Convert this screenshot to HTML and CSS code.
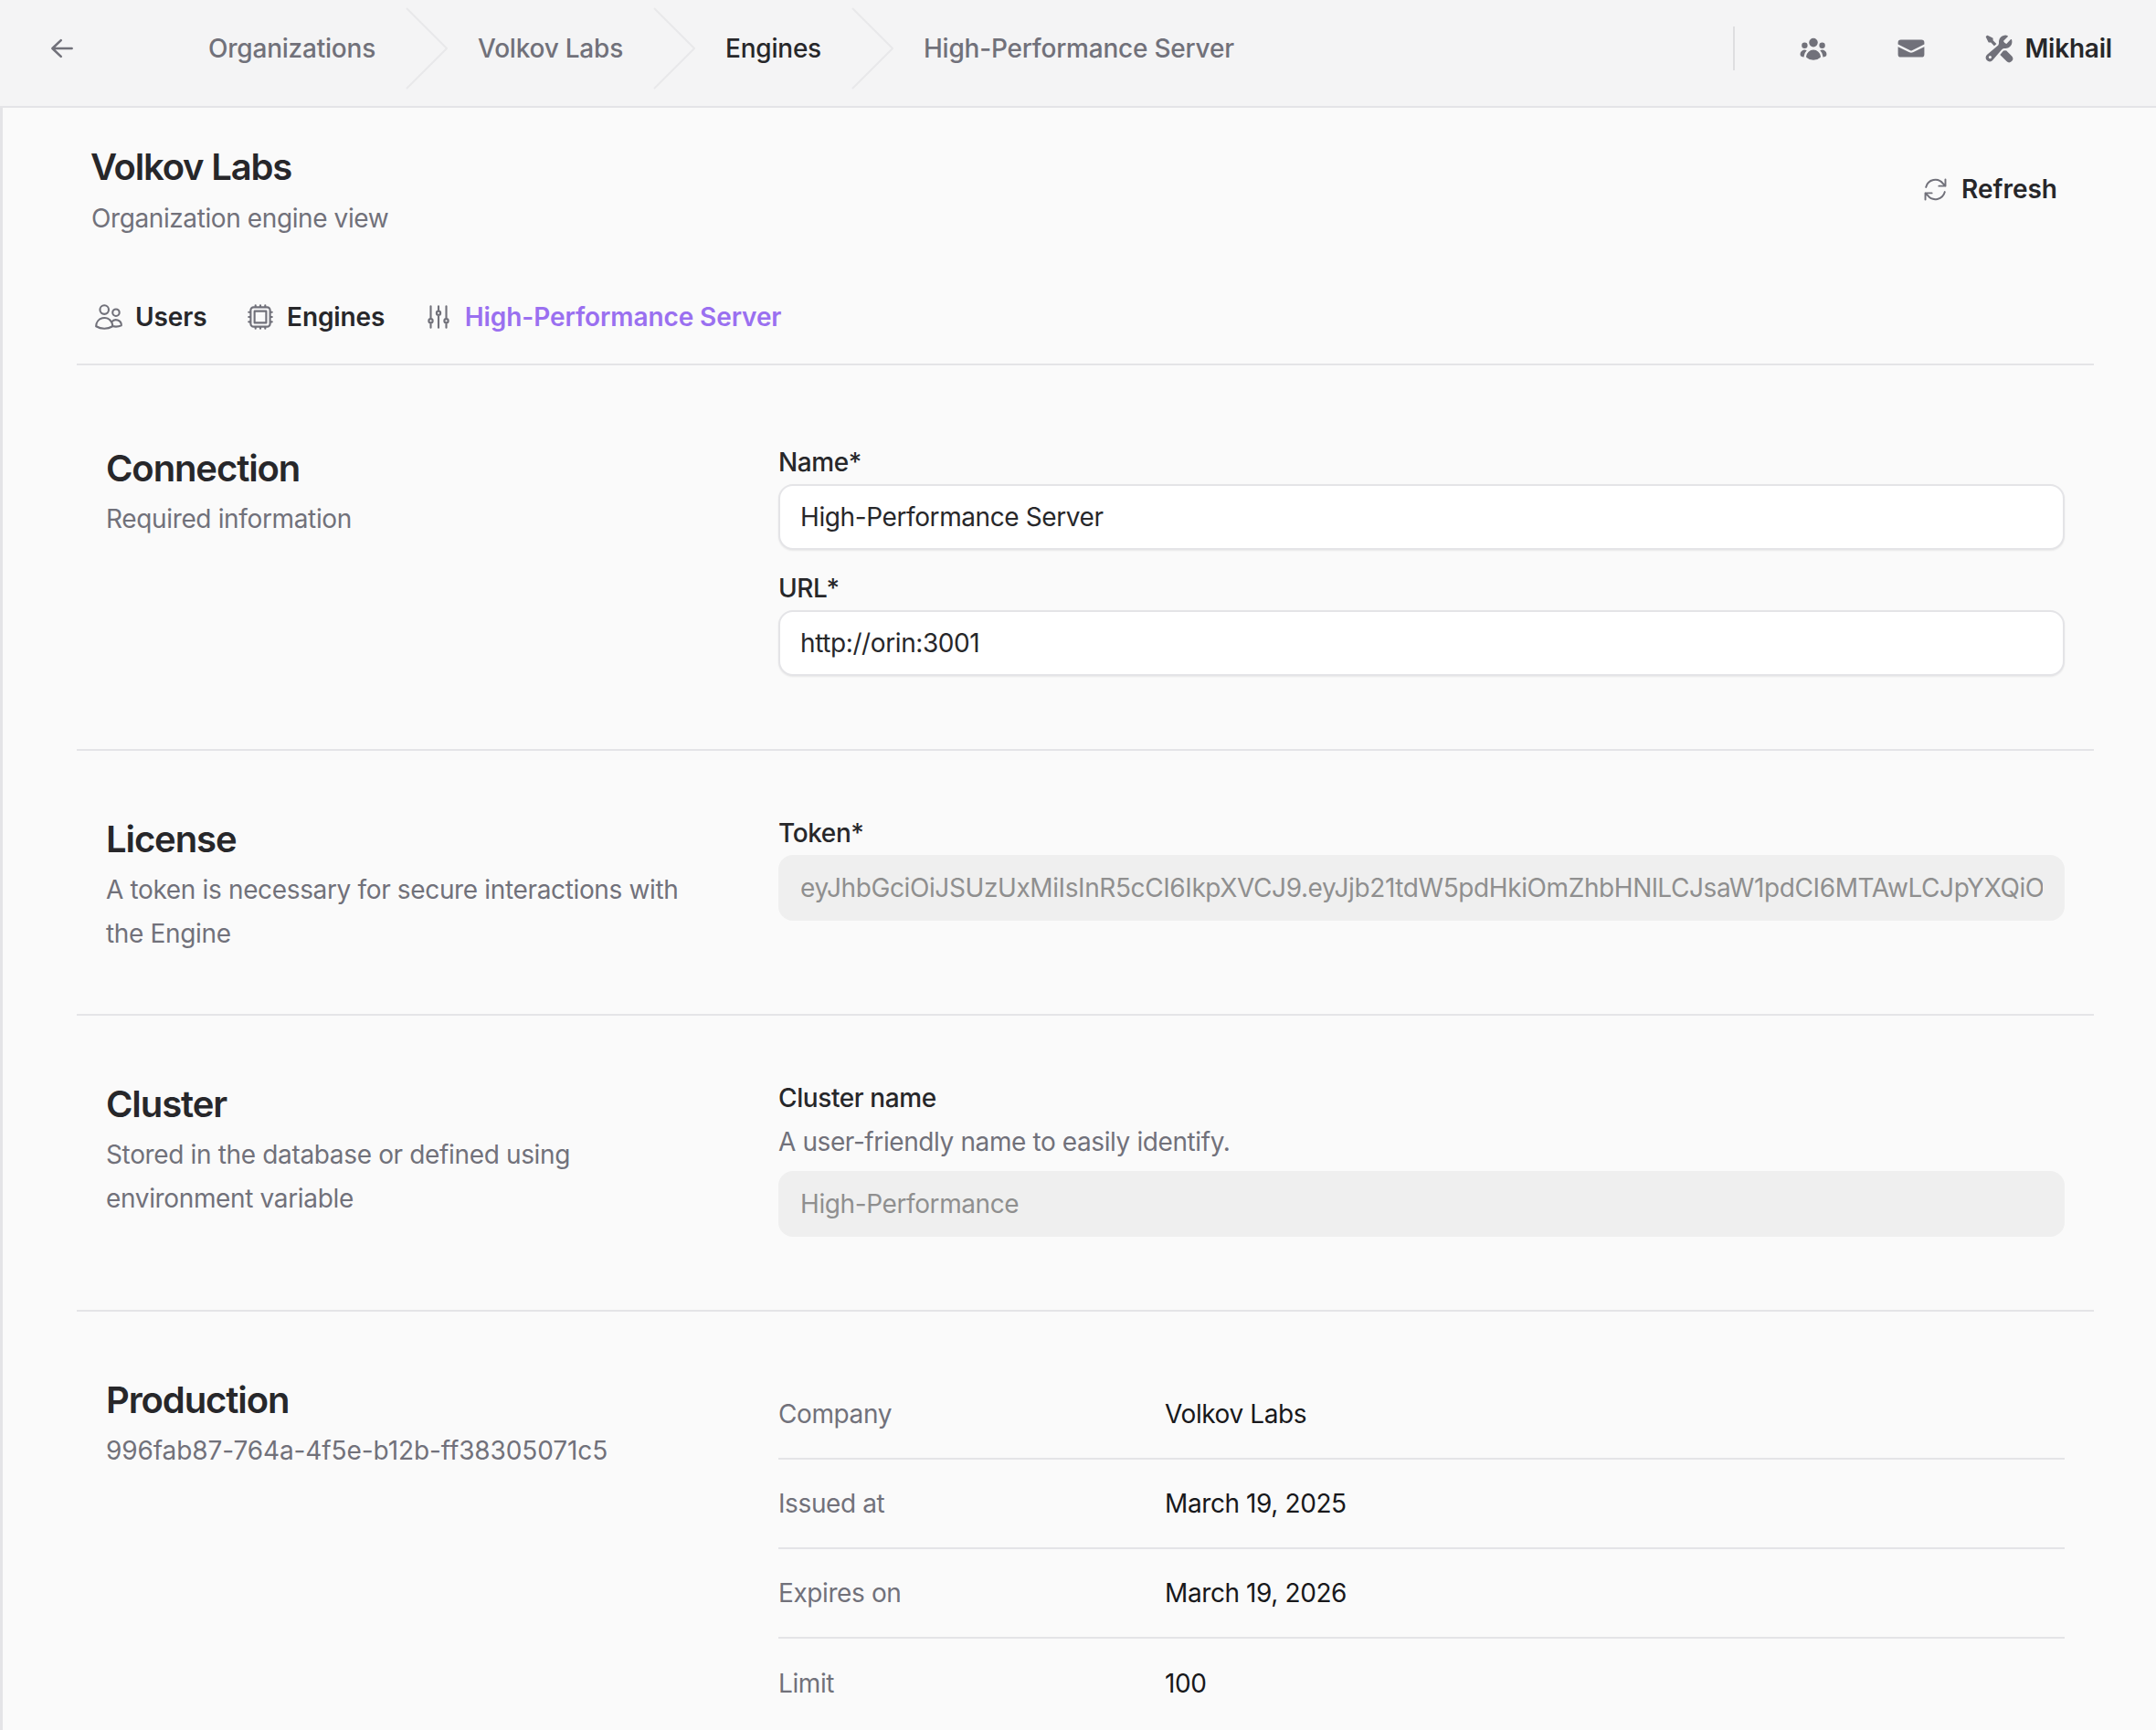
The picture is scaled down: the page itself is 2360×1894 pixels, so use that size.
FILE: index.html
```html
<!DOCTYPE html>
<html lang="en">
<head>
<meta charset="utf-8">
<title>High-Performance Server</title>
<link rel="stylesheet" href="styles.css">
</head>
<body>
<header class="topbar">
  <svg class="back" viewBox="0 0 20 20"><path fill-rule="evenodd" clip-rule="evenodd" d="M17 10a.75.75 0 0 1-.75.75H5.612l4.158 3.96a.75.75 0 1 1-1.04 1.08l-5.5-5.25a.75.75 0 0 1 0-1.08l5.5-5.25a.75.75 0 1 1 1.04 1.08L5.612 9.25H16.25A.75.75 0 0 1 17 10Z"/></svg>
  <nav class="crumbs">
    <a class="crumb">Organizations</a>
    <svg class="chev" viewBox="0 0 46 90" preserveAspectRatio="none"><path d="M1 1 L45 45 L1 89"/></svg>
    <a class="crumb">Volkov Labs</a>
    <svg class="chev" viewBox="0 0 46 90" preserveAspectRatio="none"><path d="M1 1 L45 45 L1 89"/></svg>
    <a class="crumb crumb-current">Engines</a>
    <svg class="chev" viewBox="0 0 46 90" preserveAspectRatio="none"><path d="M1 1 L45 45 L1 89"/></svg>
    <a class="crumb crumb-last">High-Performance Server</a>
  </nav>
  <div class="bar-right">
    <span class="bar-divider"></span>
    <svg class="bar-icon icon-group" viewBox="0 0 20 20"><path d="M10 9a3 3 0 1 0 0-6 3 3 0 0 0 0 6ZM6 8a2 2 0 1 1-4 0 2 2 0 0 1 4 0ZM1.49 15.326a.78.78 0 0 1-.358-.442 3 3 0 0 1 4.308-3.516 6.484 6.484 0 0 0-1.905 3.959c-.023.222-.014.442.025.654a4.97 4.97 0 0 1-2.07-.655ZM16.44 15.98a4.97 4.97 0 0 0 2.07-.654.78.78 0 0 0 .357-.442 3 3 0 0 0-4.308-3.517 6.484 6.484 0 0 1 1.907 3.96 2.32 2.32 0 0 1-.026.654ZM18 8a2 2 0 1 1-4 0 2 2 0 0 1 4 0ZM5.304 16.19a.844.844 0 0 1-.277-.71 5 5 0 0 1 9.947 0 .843.843 0 0 1-.277.71A6.975 6.975 0 0 1 10 18a6.974 6.974 0 0 1-4.696-1.81Z"/></svg>
    <svg class="bar-icon icon-mail" viewBox="0 0 20 20"><path d="M3 4a2 2 0 0 0-2 2v1.161l8.441 4.221a1.25 1.25 0 0 0 1.118 0L19 7.162V6a2 2 0 0 0-2-2H3Z"/><path d="m19 8.839-7.77 3.885a2.75 2.75 0 0 1-2.46 0L1 8.839V14a2 2 0 0 0 2 2h14a2 2 0 0 0 2-2V8.839Z"/></svg>
    <div class="user">
      <svg class="bar-icon icon-tools" viewBox="0 0 20 20"><path fill-rule="evenodd" clip-rule="evenodd" d="M14.5 10a4.5 4.5 0 0 0 4.284-5.882c-.105-.324-.51-.391-.752-.15L15.34 6.66a.454.454 0 0 1-.493.11 3.01 3.01 0 0 1-1.618-1.616.455.455 0 0 1 .11-.494l2.694-2.692c.24-.241.174-.647-.15-.752a4.5 4.5 0 0 0-5.873 4.575c.055.873-.128 1.808-.8 2.368l-7.23 6.024a2.724 2.724 0 1 0 3.837 3.837L12.02 10.8c.56-.672 1.495-.855 2.368-.8.037.003.074.005.112.005ZM5 16a1 1 0 1 1-2 0 1 1 0 0 1 2 0Z"/><path d="M14.5 11.5c.173 0 .345-.007.514-.022l3.754 3.754a2.5 2.5 0 0 1-3.536 3.536l-4.41-4.41 2.172-2.607c.052-.063.147-.138.342-.196.202-.06.469-.087.777-.067.128.008.257.012.387.012ZM6 4.586l2.33 2.33a.452.452 0 0 1-.08.09L6.8 8.214 4.586 6H3.309a.5.5 0 0 1-.447-.276l-1.7-3.402a.5.5 0 0 1 .093-.577l.49-.49a.5.5 0 0 1 .577-.094l3.402 1.7A.5.5 0 0 1 6 3.31v1.277Z"/></svg>
      <span class="user-name">Mikhail</span>
    </div>
  </div>
</header>

<main class="content">
  <div class="page-head">
    <div>
      <h1 class="page-title">Volkov Labs</h1>
      <p class="page-sub">Organization engine view</p>
    </div>
    <button class="refresh" type="button">
      <svg class="line-icon refresh-icon" viewBox="0 0 24 24"><path d="M4 10A8.2 8.2 0 0 1 18.5 7L20.5 9V3.5M20.5 9H15M20 14A8.2 8.2 0 0 1 5.5 17L3.5 15V20.5M3.5 15H9"/></svg>
      Refresh
    </button>
  </div>

  <nav class="tabs">
    <a class="tab">
      <svg class="line-icon tab-icon" viewBox="0 0 24 24"><path d="M15 19.128a9.38 9.38 0 0 0 2.625.372 9.337 9.337 0 0 0 4.121-.952 4.125 4.125 0 0 0-7.533-2.493M15 19.128v-.003c0-1.113-.285-2.16-.786-3.07M15 19.128v.106A12.318 12.318 0 0 1 8.624 21c-2.331 0-4.512-.645-6.374-1.766l-.001-.109a6.375 6.375 0 0 1 11.964-3.07M12 6.375a3.375 3.375 0 1 1-6.75 0 3.375 3.375 0 0 1 6.75 0Zm8.25 2.25a2.625 2.625 0 1 1-5.25 0 2.625 2.625 0 0 1 5.25 0Z"/></svg>
      Users
    </a>
    <a class="tab">
      <svg class="line-icon tab-icon" viewBox="0 0 24 24"><path d="M8.25 3v1.5M4.5 8.25H3m18 0h-1.5M4.5 12H3m18 0h-1.5m-15 3.75H3m18 0h-1.5M8.25 19.5V21M12 3v1.5m0 15V21m3.75-18v1.5m0 15V21m-9-1.5h10.5a2.25 2.25 0 0 0 2.25-2.25V6.75a2.25 2.25 0 0 0-2.25-2.25H6.75A2.25 2.25 0 0 0 4.5 6.75v10.5a2.25 2.25 0 0 0 2.25 2.25Zm.75-12h9v9h-9v-9Z"/></svg>
      Engines
    </a>
    <a class="tab tab-active">
      <svg class="line-icon tab-icon" viewBox="0 0 24 24"><path d="M6 13.5V3.75m0 9.75a1.5 1.5 0 0 1 0 3m0-3a1.5 1.5 0 0 0 0 3m0 3.75V16.5m12-3V3.75m0 9.75a1.5 1.5 0 0 1 0 3m0-3a1.5 1.5 0 0 0 0 3m0 3.75V16.5m-6-9V3.75m0 3.75a1.5 1.5 0 0 1 0 3m0-3a1.5 1.5 0 0 0 0 3m0 9.75V10.5"/></svg>
      High-Performance Server
    </a>
  </nav>

  <section class="section section-connection">
    <div>
      <h2 class="section-title">Connection</h2>
      <p class="section-sub">Required information</p>
    </div>
    <div class="fields">
      <label class="field">
        <span class="field-label">Name*</span>
        <input class="input" type="text" value="High-Performance Server">
      </label>
      <label class="field">
        <span class="field-label">URL*</span>
        <input class="input" type="text" value="http://orin:3001">
      </label>
    </div>
  </section>

  <section class="section section-license">
    <div>
      <h2 class="section-title">License</h2>
      <p class="section-sub">A token is necessary for secure interactions with the Engine</p>
    </div>
    <div class="fields">
      <label class="field">
        <span class="field-label">Token*</span>
        <input class="input" type="text" disabled value="eyJhbGciOiJSUzUxMiIsInR5cCI6IkpXVCJ9.eyJjb21tdW5pdHkiOmZhbHNlLCJsaW1pdCI6MTAwLCJpYXQiO">
      </label>
    </div>
  </section>

  <section class="section section-cluster">
    <div>
      <h2 class="section-title">Cluster</h2>
      <p class="section-sub">Stored in the database or defined using environment variable</p>
    </div>
    <div class="fields">
      <label class="field">
        <span class="field-label">Cluster name</span>
        <span class="field-desc">A user-friendly name to easily identify.</span>
        <input class="input" type="text" disabled value="High-Performance">
      </label>
    </div>
  </section>

  <section class="section section-production">
    <div>
      <h2 class="section-title">Production</h2>
      <p class="section-sub section-id">996fab87-764a-4f5e-b12b-ff38305071c5</p>
    </div>
    <dl class="facts">
      <div class="fact"><dt>Company</dt><dd>Volkov Labs</dd></div>
      <div class="fact"><dt>Issued at</dt><dd>March 19, 2025</dd></div>
      <div class="fact"><dt>Expires on</dt><dd>March 19, 2026</dd></div>
      <div class="fact"><dt>Limit</dt><dd>100</dd></div>
    </dl>
  </section>
</main>
</body>
</html>
```
FILE: styles.css
```css
* { box-sizing: border-box; }
html, body { height: 100%; }
body {
  margin: 0;
  height: 1894px;
  overflow: hidden;
  background: #fafafa;
  color: #27272a;
  font-family: Inter, "Noto Sans", sans-serif;
  font-size: 28px;
  line-height: 48px;
  letter-spacing: -0.4px;
}
p, h1, h2, dl, dd { margin: 0; }

.topbar {
  display: flex;
  align-items: center;
  height: 118px;
  background: #f4f4f5;
  border-bottom: 2px solid #e4e4e7;
  padding: 0 48px 10px 51px;
}
.back { width: 34px; height: 34px; fill: #71717a; flex: none; }
.crumbs { display: flex; align-items: center; margin-left: 143px; }
.crumb { font-weight: 500; color: #71717a; letter-spacing: -0.22px; }
.crumb-current { color: #27272a; }
.chev { width: 46px; height: 90px; margin: 0 33px; fill: none; stroke: #e8e8ea; stroke-width: 2; flex: none; }
.bar-right { display: flex; align-items: center; margin-left: auto; }
.bar-divider { width: 2px; height: 48px; background: #dedee0; }
.bar-icon { width: 32px; height: 32px; fill: #71717a; flex: none; }
.icon-group { margin-left: 70px; }
.icon-mail { margin-left: 75px; }
.user { display: flex; align-items: center; gap: 12px; margin-left: 64px; }
.user-name { font-weight: 600; letter-spacing: -0.2px; }

.content {
  height: 1776px;
  padding: 0 68px 0 81px;
  border-left: 3px solid #e4e4e7;
  overflow: hidden;
}
.page-head { display: flex; justify-content: space-between; align-items: center; height: 130px; padding: 0 0 0 16px; margin-top: 24px; }
.page-title { font-size: 40px; line-height: 64px; font-weight: 600; color: #27272a; letter-spacing: -1.2px; margin-left: -1px; }
.page-sub { color: #71717a; line-height: 48px; }
.refresh {
  display: flex; align-items: center; gap: 13px;
  font: 600 28px/48px Inter, sans-serif;
  color: #27272a; background: none; border: 0; padding: 0; margin-right: 40px;
}
.line-icon { fill: none; stroke: #71717a; stroke-width: 1.5; stroke-linecap: round; stroke-linejoin: round; flex: none; }
.refresh-icon { width: 31px; height: 31px; }

.tabs { display: flex; gap: 41.5px; height: 126px; padding: 4px 0 0 18px; }
.tab { display: flex; align-items: center; gap: 12px; height: 48px; margin-top: 47px; font-weight: 600; color: #27272a; letter-spacing: -0.1px; }
.tab-active { color: #9a70f0; }
.tab-icon { width: 34px; height: 34px; }

.section {
  display: grid;
  grid-template-columns: repeat(3, 1fr);
  column-gap: 64px;
  padding: 0 32px;
  border-top: 2px solid #e4e4e7;
}
.section > :last-child { grid-column: span 2; }
.section-title { font-size: 40px; line-height: 62px; font-weight: 600; color: #27272a; letter-spacing: -1.1px; }
.section-sub { color: #71717a; letter-spacing: -0.35px; }
.section-id { letter-spacing: -0.1px; }
.section-connection { height: 422px; padding-top: 82px; }
.section-license { height: 290px; padding-top: 66px; }
.section-cluster { height: 324px; padding-top: 66px; }
.section-production { height: 460px; padding-top: 66px; }

.fields { display: flex; flex-direction: column; gap: 18px; }
.field { display: block; }
.field-label { display: block; font-weight: 500; line-height: 48px; }
.field-desc { display: block; color: #71717a; margin-bottom: 8px; }
.input {
  display: block; width: 100%; height: 72px;
  padding: 0 22px;
  font: 400 28px/40px Inter, sans-serif;
  letter-spacing: -0.4px;
  color: #27272a;
  background: #fff;
  border: 2px solid #e4e4e7;
  border-radius: 16px;
  box-shadow: 0 1px 2px rgba(0,0,0,.08);
  outline: 0;
}
.input:disabled { background: #efefef; border-color: #efefef; color: #8f8f8f; box-shadow: none; opacity: 1; -webkit-text-fill-color: #8f8f8f; }

.facts { display: block; margin-top: -2px; }
.fact { display: grid; grid-template-columns: 423px 1fr; align-items: center; height: 98px; border-bottom: 2px solid #e4e4e7; }
.fact dt { color: #71717a; }
.fact dd { color: #18181b; }
.fact:last-child { border-bottom: 0; }
```
